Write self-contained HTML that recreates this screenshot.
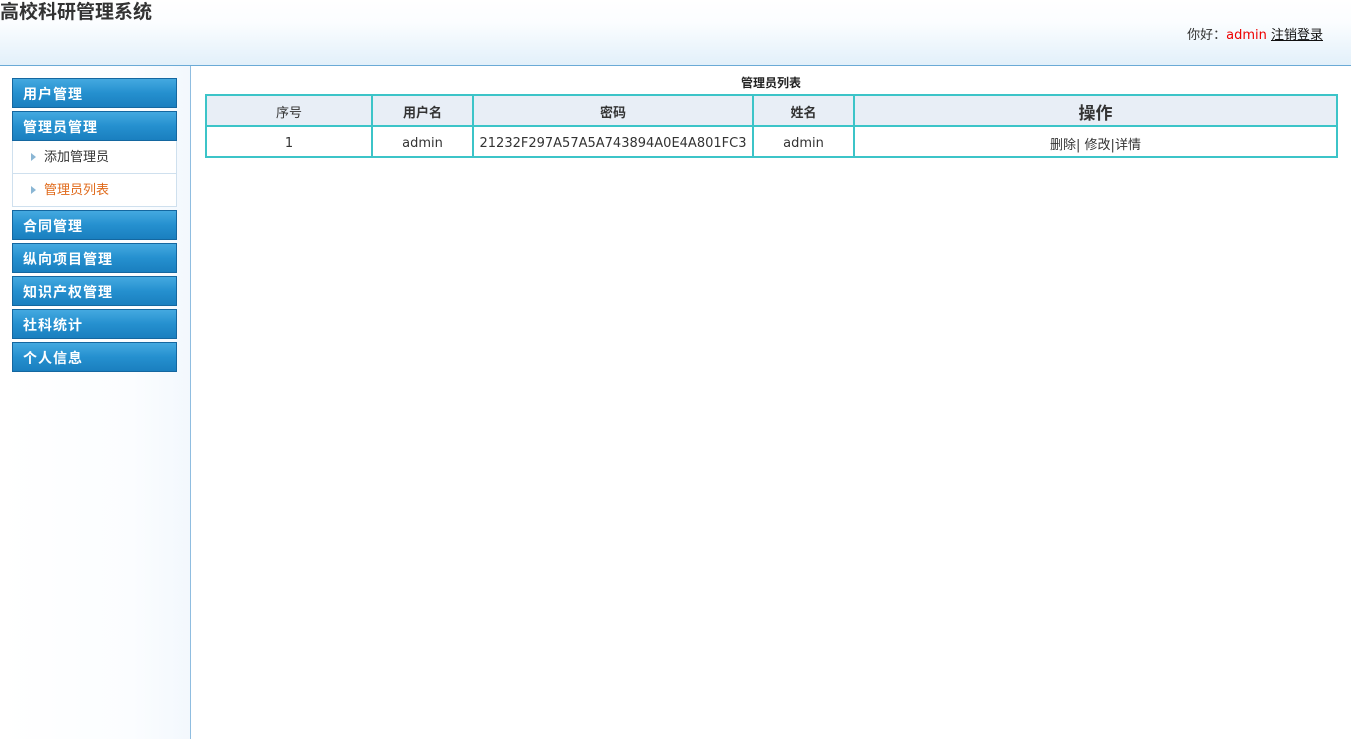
<!DOCTYPE html>
<html><head><meta charset="utf-8"><style>
*{margin:0;padding:0;box-sizing:border-box}
body{width:1351px;height:739px;overflow:hidden;background:#fff;font-family:"DejaVu Sans","Noto Sans CJK SC",sans-serif;font-size:13px;color:#333;position:relative}
#top{position:absolute;left:0;top:0;width:1351px;height:66px;background:linear-gradient(#fff 0%,#fbfdff 35%,#e2f0fa 100%);border-bottom:1px solid #6aaad6}
#top h1{position:absolute;left:0;top:1px;font-size:19px;font-weight:bold;color:#333;line-height:24px;font-family:"Liberation Sans","Noto Sans CJK SC",sans-serif}
#top .u{position:absolute;right:28px;top:24px;font-size:13px;color:#333}
#top .u span{color:#e00}
#top .u a{color:#111;text-decoration:underline}
#side{position:absolute;left:0;top:66px;width:191px;height:673px;background:linear-gradient(90deg,#fff 0%,#fbfdff 70%,#f3f8fd 100%);border-right:1px solid #8fbde0}
.h{position:absolute;left:12px;width:165px;height:30px;background:linear-gradient(#44a9e0,#2590cf 50%,#1a7fbf);border:1px solid #1467a0;color:#fff;font-weight:bold;font-size:14px;line-height:30px;padding-left:10px;letter-spacing:1px;font-family:"Liberation Sans","Noto Sans CJK SC",sans-serif}
.s{position:absolute;left:12px;width:165px;height:33px;background:#fff;border:1px solid #cfe0ee;border-top:none;line-height:33px;padding-left:31px;font-size:13px;color:#333}
.s:before{content:"";position:absolute;left:18px;top:12px;border-left:5px solid #8ab6d4;border-top:4px solid transparent;border-bottom:4px solid transparent}
#main{position:absolute;left:191px;top:66px}
.t{position:absolute;left:0;top:8px;width:1160px;text-align:center;font-weight:bold;font-size:12px;color:#222}
table{position:absolute;left:14px;top:28px;width:1133px;border-collapse:collapse}
td,th{border:2px solid #3cc4c8;text-align:center;height:31px;font-size:13px;color:#333;padding-top:1px}
td{padding-top:3px}
th{background:#e8eef6;font-weight:bold}
</style></head><body>
<div id="top"><h1>高校科研管理系统</h1><div class="u">你好：<span>admin</span> <a>注销登录</a></div></div>
<div id="side">
<div class="h" style="top:12px">用户管理</div>
<div class="h" style="top:45px">管理员管理</div>
<div class="s" style="top:75px">添加管理员</div>
<div class="s" style="top:108px;color:#e06a1a">管理员列表</div>
<div class="h" style="top:144px">合同管理</div>
<div class="h" style="top:177px">纵向项目管理</div>
<div class="h" style="top:210px">知识产权管理</div>
<div class="h" style="top:243px">社科统计</div>
<div class="h" style="top:276px">个人信息</div>
</div>
<div id="main"><div class="t">管理员列表</div>
<table><tr><th style="width:166px;font-weight:normal">序号</th><th style="width:101px">用户名</th><th style="width:280px">密码</th><th style="width:101px">姓名</th><th style="font-size:17px">操作</th></tr>
<tr><td>1</td><td>admin</td><td>21232F297A57A5A743894A0E4A801FC3</td><td>admin</td><td>删除| 修改|详情</td></tr></table></div>
</body></html>
